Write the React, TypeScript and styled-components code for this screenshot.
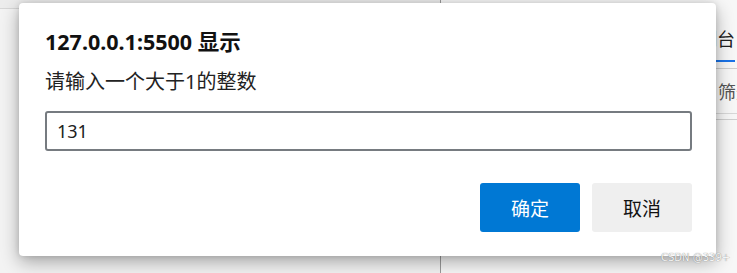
import React from "react";
import styled, { createGlobalStyle } from "styled-components";

const Global = createGlobalStyle`
  html, body { margin: 0; padding: 0; }
  body {
    width: 737px;
    height: 273px;
    overflow: hidden;
    background: #f1f1f1;
    font-family: "Noto Sans", "Noto Sans CJK SC", sans-serif;
  }
`;

const Page = styled.div`
  position: relative;
  width: 737px;
  height: 273px;
  display: flex;
  overflow: hidden;
`;

const LeftPane = styled.div`
  width: 440px;
  flex-shrink: 0;
  display: flex;
  flex-direction: column;
  background: #f3f3f3;
  border-right: 1px solid #9a9a9a;
`;

const TopBar = styled.div`
  height: 8px;
  border-bottom: 1px solid #d6d6d6;
  background: #ececec;
`;

const DevTools = styled.div`
  flex: 1;
  min-width: 0;
  display: flex;
  flex-direction: column;
  background: #f7f7f7;
`;

const TabRow = styled.div`
  height: 60px;
  display: flex;
  justify-content: flex-end;
  align-items: flex-end;
  padding-right: 2px;
`;

const Tab = styled.div`
  font-size: 18px;
  line-height: 26px;
  color: #202020;
  padding-bottom: 8px;
  border-bottom: 2px solid #1a73e8;
  margin-bottom: -2px;
`;

const Divider = styled.div<{ $gap?: number }>`
  height: 1px;
  background: #cfcfcf;
  margin-top: ${(p) => p.$gap ?? 0}px;
`;

const FilterRow = styled.div`
  height: 44px;
  display: flex;
  align-items: center;
  padding-left: 277px;
  font-size: 18px;
  color: #555;
  white-space: nowrap;
  overflow: hidden;
  border-bottom: 1px solid #d8d8d8;
`;

const Dialog = styled.div`
  position: absolute;
  left: 19px;
  top: 3px;
  width: 697px;
  height: 253px;
  box-sizing: border-box;
  background: #ffffff;
  border-radius: 4px;
  box-shadow: 0 6px 18px rgba(0, 0, 0, 0.32), 0 0 6px rgba(0, 0, 0, 0.12);
  padding: 25px 24px 24px 26px;
  display: flex;
  flex-direction: column;
`;

const Title = styled.div`
  font-size: 21.5px;
  line-height: 28px;
  font-weight: 700;
  color: #111;
`;

const Message = styled.div`
  margin-top: 12px;
  font-size: 20px;
  line-height: 28px;
  color: #222;
`;

const Input = styled.input`
  margin-top: 15px;
  width: 647px;
  height: 40px;
  box-sizing: border-box;
  border: 2px solid #767b80;
  border-radius: 3px;
  padding: 0 10px;
  font-family: "Noto Sans", "Noto Sans CJK SC", sans-serif;
  font-size: 18px;
  color: #202020;
  outline: none;
`;

const Actions = styled.div`
  margin-top: auto;
  display: flex;
  justify-content: flex-end;
  gap: 12px;
`;

const Button = styled.button<{ $primary?: boolean }>`
  width: 100px;
  height: 49px;
  border: none;
  border-radius: 3px;
  font-family: "Noto Sans", "Noto Sans CJK SC", sans-serif;
  font-size: 19px;
  background: ${(p) => (p.$primary ? "#0078d4" : "#efefef")};
  color: ${(p) => (p.$primary ? "#ffffff" : "#111")};
  cursor: pointer;
`;

const Watermark = styled.div`
  position: absolute;
  left: 661px;
  top: 252px;
  font-family: "DejaVu Sans", sans-serif;
  font-size: 10px;
  line-height: 12px;
  color: #f4f4f4;
  text-shadow: 0 0 1px #666;
`;

export default function App() {
  return (
    <>
      <Global />
      <Page>
        <LeftPane>
          <TopBar />
        </LeftPane>
        <DevTools>
          <TabRow>
            <Tab>控制台</Tab>
          </TabRow>
          <Divider $gap={8} />
          <FilterRow>筛选器</FilterRow>
          <Divider $gap={5} />
        </DevTools>
        <Dialog>
          <Title>127.0.0.1:5500 显示</Title>
          <Message>请输入一个大于1的整数</Message>
          <Input defaultValue="131" />
          <Actions>
            <Button $primary>确定</Button>
            <Button>取消</Button>
          </Actions>
        </Dialog>
        <Watermark>CSDN @339+</Watermark>
      </Page>
    </>
  );
}
